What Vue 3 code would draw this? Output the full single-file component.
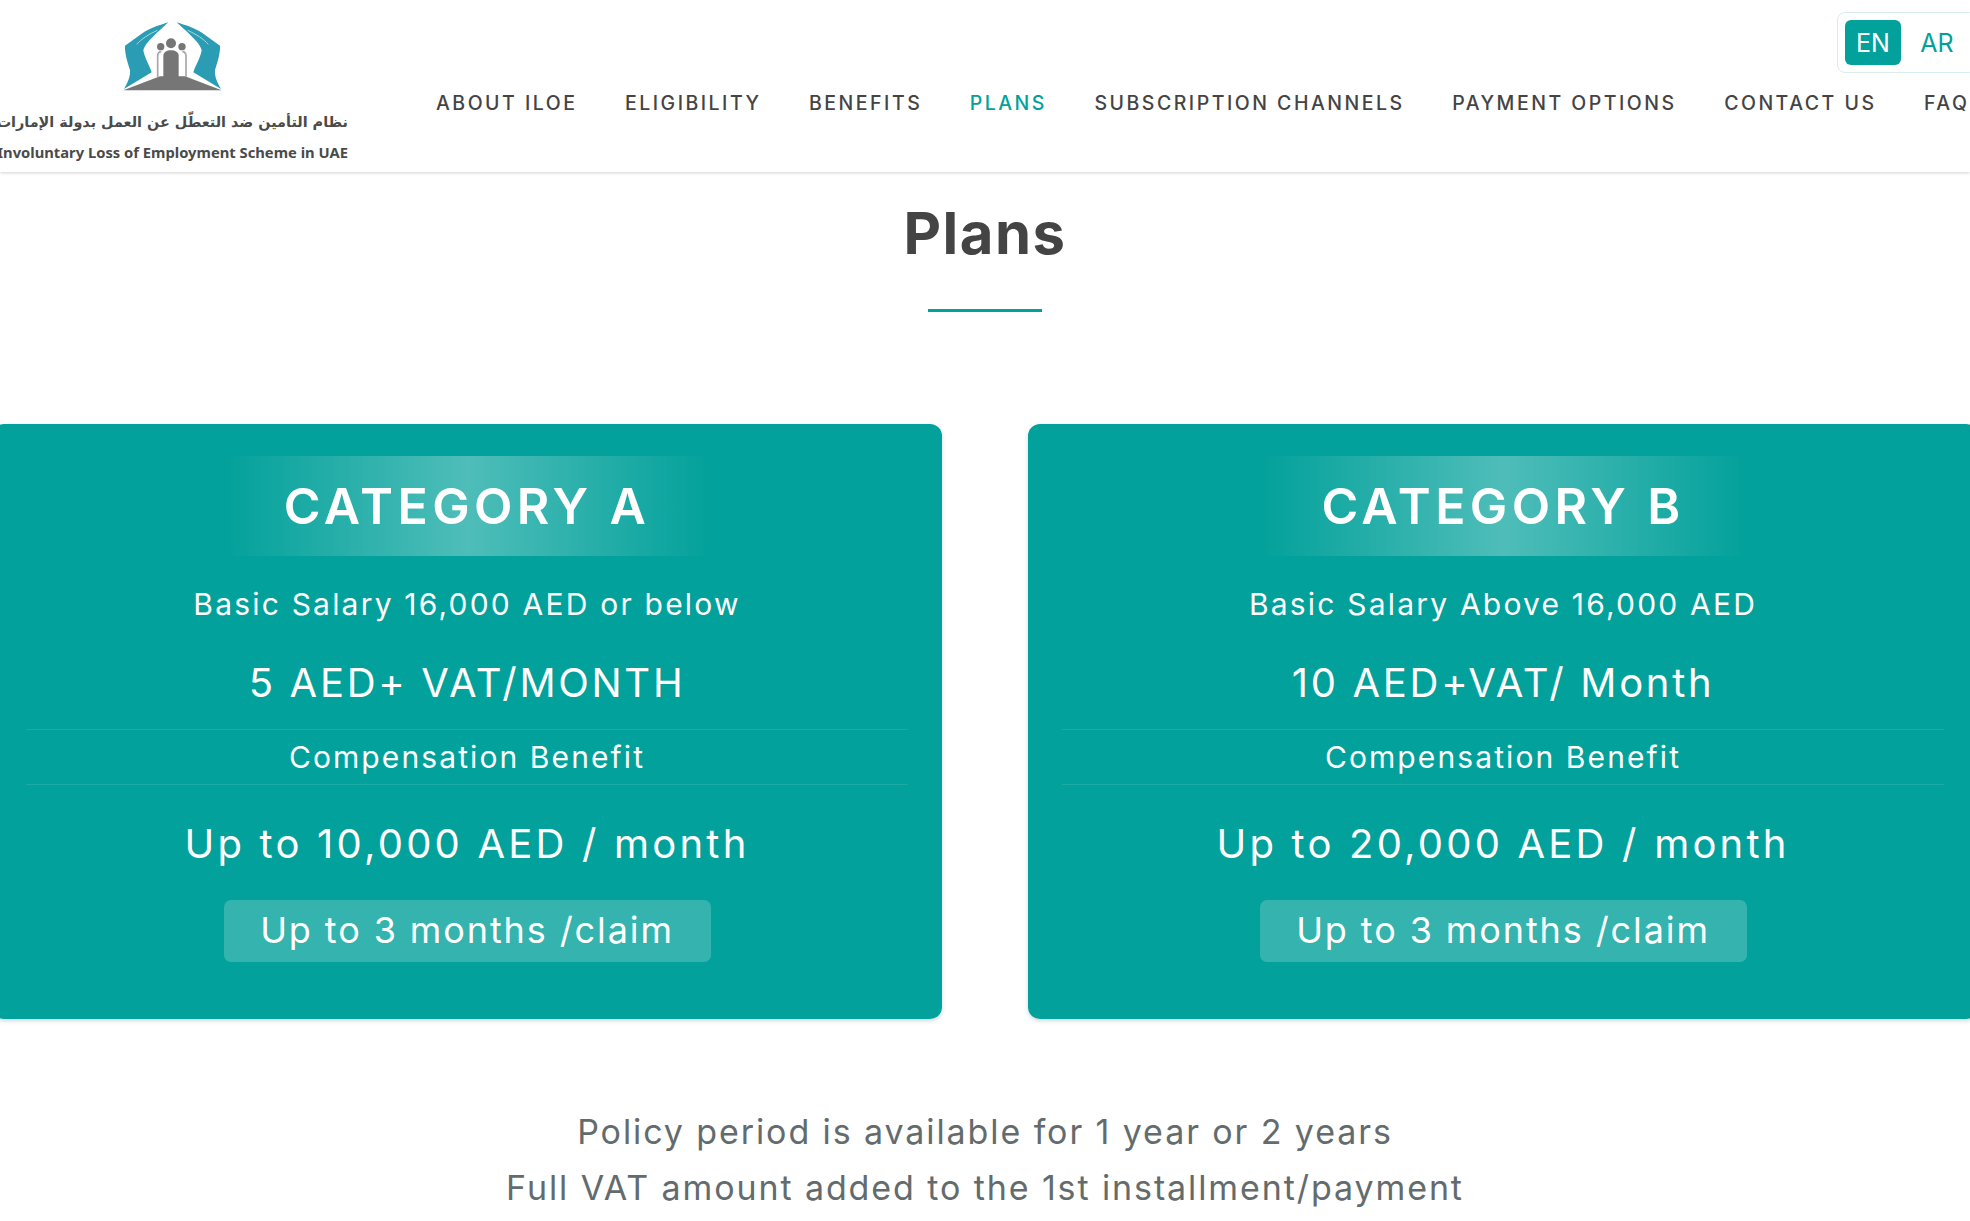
<template>
  <div class="page">
    <header class="site-header">
      <div class="logo">
        <svg class="logo__mark" viewBox="0 0 375 240" aria-hidden="true">
          <g fill="#2a9cb4">
            <path d="M175 22C150 30 118 40 98 54L45 92C44 115 52 140 60 165C62 185 52 205 42 222L125 172C118 150 104 130 100 106C104 88 122 72 140 54Z" />
            <path d="M200 22C225 30 257 40 277 54L330 92C331 115 323 140 315 165C313 185 323 205 333 222L250 172C257 150 271 130 275 106C271 88 253 72 235 54Z" />
          </g>
          <path d="M80 88C94 72 116 58 142 46M295 88C281 72 259 58 233 46" fill="none" stroke="#a9d8e3" stroke-width="3" />
          <g fill="#767676">
            <circle cx="183" cy="85" r="15" />
            <circle cx="152" cy="95" r="11" />
            <circle cx="216" cy="95" r="11" />
            <path d="M160 190V122C160 112 170 106 183 106C196 106 206 112 206 122V190Z" />
            <path d="M40 226L150 184H225L335 226Z" />
          </g>
          <path d="M143 186V124C143 114 148 110 154 110M228 186V124C228 114 223 110 217 110" fill="none" stroke="#a8a8a8" stroke-width="5" />
        </svg>
        <div class="logo__ar" dir="rtl">نظام التأمين ضد التعطّل عن العمل بدولة الإمارات</div>
        <div class="logo__en">Involuntary Loss of Employment Scheme in UAE</div>
      </div>
      <div class="site-header__right">
        <div class="lang">
          <span class="lang__item lang__item--on">EN</span>
          <span class="lang__item">AR</span>
        </div>
        <nav class="menu">
          <a v-for="link in links" :key="link" class="menu__link" :class="{ 'menu__link--on': link === 'PLANS' }">{{ link }}</a>
        </nav>
      </div>
    </header>

    <main class="plans">
      <h1 class="plans__title">Plans</h1>
      <div class="plans__rule"></div>
      <div class="plans__row">
        <section v-for="plan in plans" :key="plan.name" class="card">
          <h2 class="card__name">{{ plan.name }}</h2>
          <p class="card__salary">{{ plan.salary }}</p>
          <p class="card__price">{{ plan.price }}</p>
          <p class="card__label">Compensation Benefit</p>
          <p class="card__amount">{{ plan.amount }}</p>
          <div class="card__claim">Up to 3 months /claim</div>
        </section>
      </div>
      <div class="plans__notes">
        <p>Policy period is available for 1 year or 2 years</p>
        <p>Full VAT amount added to the 1st installment/payment</p>
      </div>
    </main>
  </div>
</template>

<script setup>
const links = [
  'ABOUT ILOE',
  'ELIGIBILITY',
  'BENEFITS',
  'PLANS',
  'SUBSCRIPTION CHANNELS',
  'PAYMENT OPTIONS',
  'CONTACT US',
  'FAQ',
]

const plans = [
  {
    name: 'CATEGORY A',
    salary: 'Basic Salary 16,000 AED or below',
    price: '5 AED+ VAT/MONTH',
    amount: 'Up to 10,000 AED / month',
  },
  {
    name: 'CATEGORY B',
    salary: 'Basic Salary Above 16,000 AED',
    price: '10 AED+VAT/ Month',
    amount: 'Up to 20,000 AED / month',
  },
]
</script>

<style>
html,
body {
  margin: 0;
  background: #fff;
  overflow: hidden;
}
</style>

<style scoped>
.page {
  width: 1970px;
  height: 1221px;
  overflow: hidden;
  font-family: Inter, "Liberation Sans", sans-serif;
  color: #444;
}
.site-header {
  display: flex;
  height: 172px;
  box-shadow: 0 1px 3px rgba(0, 0, 0, 0.18);
  position: relative;
}
.logo {
  width: 348px;
  flex: none;
  display: flex;
  flex-direction: column;
  align-items: flex-end;
  color: #4a4a4a;
  font-family: "Noto Sans", "DejaVu Sans", sans-serif;
  font-weight: 700;
  white-space: nowrap;
}
.logo__mark {
  width: 125px;
  height: 80px;
  margin: 15px 113px 0 0;
  filter: blur(0.4px);
}
.logo__ar {
  font-family: "DejaVu Sans", sans-serif;
  font-size: 14.4px;
  line-height: 22px;
  margin-top: 16px;
}
.logo__en {
  font-size: 14.75px;
  line-height: 20px;
  margin-top: 9px;
}
.site-header__right {
  flex: 1;
  min-width: 0;
  position: relative;
}
.lang {
  position: absolute;
  top: 12px;
  left: 1489px;
  width: 140px;
  height: 61px;
  box-sizing: border-box;
  border: 1px solid #d8eeed;
  border-radius: 8px;
  padding: 7px;
  display: flex;
  gap: 8px;
  font-size: 25px;
  color: #03a19b;
}
.lang__item {
  width: 56px;
  height: 45px;
  display: flex;
  align-items: center;
  justify-content: center;
  border-radius: 6px;
}
.lang__item--on {
  background: #03a19b;
  color: #fff;
}
.menu {
  display: flex;
  gap: 47.5px;
  padding: 89px 0 0 88px;
  white-space: nowrap;
}
.menu__link {
  font-size: 19.5px;
  font-weight: 500;
  line-height: 28px;
  letter-spacing: 2.5px;
  color: #444;
}
.menu__link--on {
  color: #03a19b;
}
.plans__title {
  margin: 26px 0 0;
  font-size: 58px;
  line-height: 70px;
  font-weight: 700;
  letter-spacing: 1.5px;
  text-align: center;
  color: #444;
}
.plans__rule {
  width: 114px;
  height: 3px;
  margin: 41px auto 0;
  background: #03a19b;
}
.plans__row {
  display: grid;
  grid-template-columns: 950px 950px;
  gap: 86px;
  margin: 112px 0 0 -8px;
}
.card {
  height: 595px;
  box-sizing: border-box;
  padding-top: 32px;
  background: #03a19b;
  border-radius: 12px;
  box-shadow: 0 2px 4px rgba(0, 80, 80, 0.2);
  color: #fff;
  text-align: center;
}
.card p {
  margin: 0;
}
.card__name {
  width: 485px;
  height: 100px;
  margin: 0 auto;
  font-size: 50px;
  line-height: 100px;
  font-weight: 600;
  letter-spacing: 4.4px;
  background: linear-gradient(90deg, rgba(255, 255, 255, 0), rgba(255, 255, 255, 0.3) 50%, rgba(255, 255, 255, 0));
}
.card__salary {
  margin-top: 28px !important;
  font-size: 30px;
  line-height: 40px;
  letter-spacing: 2.2px;
}
.card__price {
  margin-top: 34px !important;
  font-size: 40px;
  line-height: 50px;
  letter-spacing: 2.7px;
}
.card__label {
  margin: 21px 34px 0 !important;
  font-size: 30px;
  line-height: 54px;
  letter-spacing: 2.1px;
  border-top: 1px solid rgba(255, 255, 255, 0.1);
  border-bottom: 1px solid rgba(255, 255, 255, 0.1);
}
.card__amount {
  margin-top: 34px !important;
  font-size: 40px;
  line-height: 50px;
  letter-spacing: 3.2px;
}
.card__claim {
  width: 487px;
  height: 62px;
  margin: 31px auto 0;
  border-radius: 7px;
  background: rgba(255, 255, 255, 0.2);
  font-size: 36px;
  line-height: 60px;
  letter-spacing: 1.9px;
}
.plans__notes {
  margin-top: 85px;
  text-align: center;
  font-size: 34px;
  line-height: 56px;
  letter-spacing: 1.9px;
  color: #636b6d;
}
.plans__notes p {
  margin: 0;
}
</style>
